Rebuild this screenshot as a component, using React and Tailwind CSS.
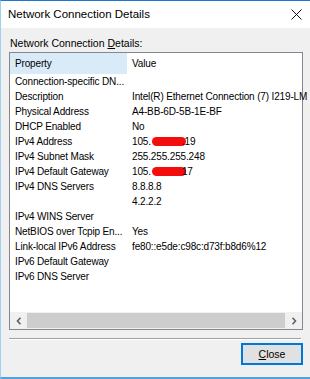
import React from 'react';

const rows = [
    ['Connection-specific DN...', ''],
    ['Description', 'Intel(R) Ethernet Connection (7) I219-LM'],
    ['Physical Address', 'A4-BB-6D-5B-1E-BF'],
    ['DHCP Enabled', 'No'],
    ['IPv4 Address', 'addr'],
    ['IPv4 Subnet Mask', '255.255.255.248'],
    ['IPv4 Default Gateway', 'gw'],
    ['IPv4 DNS Servers', '8.8.8.8'],
    ['', '4.2.2.2'],
    ['IPv4 WINS Server', ''],
    ['NetBIOS over Tcpip En...', 'Yes'],
    ['Link-local IPv6 Address', 'fe80::e5de:c98c:d73f:b8d6%12'],
    ['IPv6 Default Gateway', ''],
    ['IPv6 DNS Server', ''],
];

function Redacted({ tail }) {
    return (
        <span className="flex items-center">
            <span>105.</span>
            <span className="relative inline-block w-[31px] h-[13px]">
                <span className="absolute left-[1px] top-[2px] w-[34px] h-[9px] rounded-full bg-[#f40d0d]" />
            </span>
            <span className="relative">{tail}</span>
        </span>
    );
}

function Value({ v }) {
    if (v === 'addr') return <Redacted tail=".19" />;
    if (v === 'gw') return <Redacted tail="17" />;
    return <span>{v}</span>;
}

export default function App() {
    return (
        <div
            className="w-[310px] h-[379px] bg-[#f0f0f0] flex flex-col border-t border-t-[#1d79cf] border-l border-l-[#9fd0f0] border-b-2 border-b-[#4ea3e2] text-black overflow-hidden"
            style={{ fontFamily: '"Liberation Sans", Arial, sans-serif' }}
        >
            {/* Title bar */}
            <div className="h-[27px] bg-white flex items-center justify-between pl-[7px] pr-[7px] shrink-0">
                <span className="text-[11.5px]">Network Connection Details</span>
                <svg width="11" height="11" viewBox="0 0 11 11" className="mr-[1px]">
                    <path d="M0.5 0.5 L10.5 10.5 M10.5 0.5 L0.5 10.5" stroke="#111" strokeWidth="1" />
                </svg>
            </div>

            {/* Body */}
            <div className="flex-1 flex flex-col pl-[8px] pr-[7px] text-[10px] leading-[13px]">
                <div className="mt-[9px] ml-[1px] h-[13px] text-[10.5px]">
                    Network Connection <span className="underline">D</span>etails:
                </div>

                <div className="mt-[2px] h-[278px] border border-[#828790] bg-white flex flex-col tracking-[-0.15px]">
                    <div className="h-[21px] flex items-center shrink-0">
                        <div className="w-[117px] h-full bg-[#d9ebf9] flex items-center pl-[5px]">Property</div>
                        <div className="pl-[5px]">Value</div>
                    </div>
                    {rows.map(([p, v], i) => (
                        <div key={i} className="h-[15px] flex items-center whitespace-nowrap">
                            <div className="w-[117px] pl-[5px] shrink-0 overflow-hidden">{p}</div>
                            <div className="pl-[5px]">
                                <Value v={v} />
                            </div>
                        </div>
                    ))}
                    <div className="flex-1" />
                    {/* Horizontal scrollbar */}
                    <div className="h-[17px] flex items-center bg-[#f0f0f0] shrink-0">
                        <div className="w-[17px] h-full flex items-center justify-center">
                            <svg width="6" height="8" viewBox="0 0 6 8">
                                <path d="M4.5 0.8 L1.5 4 L4.5 7.2" fill="none" stroke="#606060" strokeWidth="1.6" />
                            </svg>
                        </div>
                        <div className="flex-1 h-full flex items-center">
                            <div className="w-full h-[15px] bg-[#cdcdcd]" />
                        </div>
                        <div className="w-[17px] h-full flex items-center justify-center">
                            <svg width="6" height="8" viewBox="0 0 6 8">
                                <path d="M1.5 0.8 L4.5 4 L1.5 7.2" fill="none" stroke="#606060" strokeWidth="1.6" />
                            </svg>
                        </div>
                    </div>
                </div>

                {/* Separator */}
                <div className="mt-[8px] mr-[2px] h-[2px] border-t border-t-[#a0a0a0] border-b border-b-white" />

                <div className="flex justify-end mt-[3px]">
                    <button className="w-[62px] h-[22px] border-2 border-[#0078d7] bg-[#e1e1e1] flex items-center justify-center text-[10.5px]">
                        <span>
                            <span className="underline">C</span>lose
                        </span>
                    </button>
                </div>
            </div>
        </div>
    );
}
